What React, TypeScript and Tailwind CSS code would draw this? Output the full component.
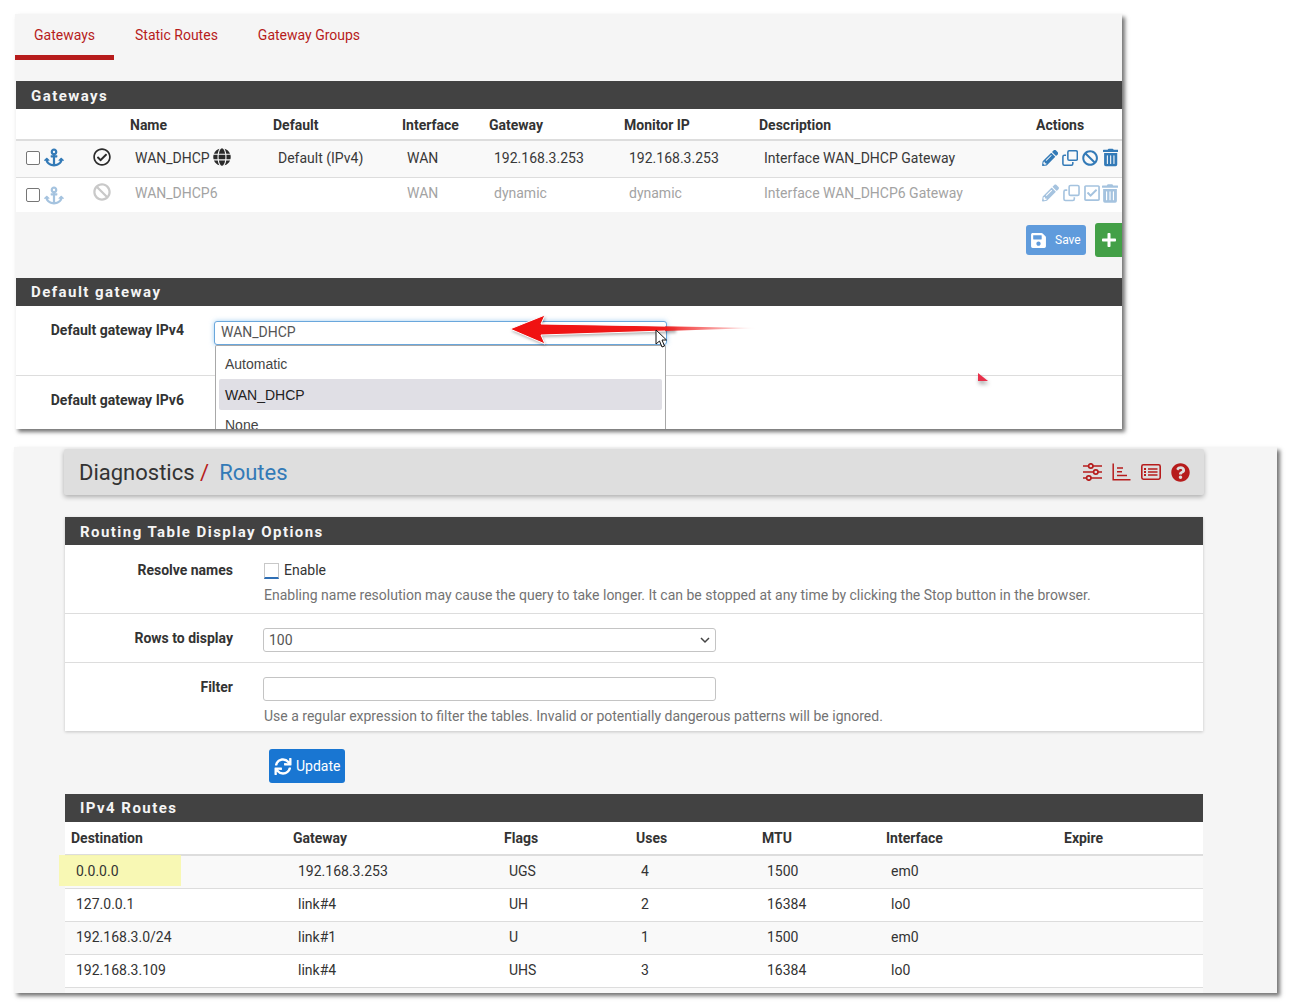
import { FaAnchor, FaBan, FaGlobe, FaPencilAlt, FaPlus, FaQuestionCircle, FaRegCheckCircle, FaRegCheckSquare, FaSave, FaSync, FaTrashAlt } from "react-icons/fa";

const gatewayCols = "grid grid-cols-[114px_143px_129px_87px_135px_135px_277px_82px]";
const routeCols = "grid grid-cols-[222px_211px_132px_126px_124px_178px_145px]";

const routes = [
  ["0.0.0.0", "192.168.3.253", "UGS", "4", "1500", "em0"],
  ["127.0.0.1", "link#4", "UH", "2", "16384", "lo0"],
  ["192.168.3.0/24", "link#1", "U", "1", "1500", "em0"],
  ["192.168.3.109", "link#4", "UHS", "3", "16384", "lo0"],
];

function SectionHead({ title, tight }: { title: string; tight?: boolean }) {
  return (
    <div className={`h-[28px] bg-[#424242] pl-[15px] text-[15px] font-bold tracking-[1.45px] text-[#f5f5f5] ${tight ? "leading-[28px]" : "leading-[30px]"}`}>
      {title}
    </div>
  );
}

function Checkbox() {
  return <span className="block h-[14px] w-[14px] rounded-[2px] border border-[#767676] bg-white" />;
}

function CloneIcon() {
  return (
    <svg className="h-[18px] w-[18px]" viewBox="0 0 18 18" fill="none" stroke="currentColor" strokeWidth="1.7">
      <rect x="6.5" y="1" width="10.5" height="10.5" rx="1.5" />
      <path d="M4.5 6 H2.6 a1.6 1.6 0 0 0 -1.6 1.6 V15.4 a1.6 1.6 0 0 0 1.6 1.6 H10.4 a1.6 1.6 0 0 0 1.6 -1.6 V13.5" />
    </svg>
  );
}

function GatewayRow({ dim, name, icon, def, gw, monitor, desc, actions, status, className }: {
  dim?: boolean; name: string; icon?: boolean; def: string; gw: string; monitor: string; desc: string;
  actions: React.ReactNode; status: React.ReactNode; className: string;
}) {
  return (
    <div className={`${gatewayCols} items-center text-sm ${dim ? "text-[#a3a3a3]" : "text-[#383838]"} ${className}`}>
      <div className={`flex items-center pl-[10px] ${dim ? "mt-[4px]" : ""}`}>
        <Checkbox />
        <FaAnchor className={`ml-[4px] h-[19px] w-[20px] ${dim ? "text-[#a5c3df]" : "text-[#337ab7]"}`} />
        <span className={`ml-[29px] ${dim ? "mb-[6px]" : "mb-[2px]"}`}>{status}</span>
      </div>
      <div className="flex items-center gap-[3px] pl-[5px]">
        {name}
        {icon && <FaGlobe className="mb-[1px] h-[18px] w-[18px] text-[#2b2b2b]" />}
      </div>
      <div className="pl-[5px]">{def}</div>
      <div className="pl-[5px]">WAN</div>
      <div className="pl-[5px]">{gw}</div>
      <div className="pl-[5px]">{monitor}</div>
      <div className="pl-[5px]">{desc}</div>
      <div className={`flex items-center gap-[4px] ${dim ? "text-[#a5c3df]" : "text-[#337ab7]"}`}>{actions}</div>
    </div>
  );
}

function Arrow() {
  return (
    <svg className="absolute left-[495px] top-[300px] h-[60px] w-[270px]" viewBox="0 0 270 60">
      <defs>
        <linearGradient id="tail" x1="0" x2="1" y1="0" y2="0">
          <stop offset="0" stopColor="#f01010" />
          <stop offset="0.62" stopColor="#f01c1c" />
          <stop offset="1" stopColor="#f01c1c" stopOpacity="0" />
        </linearGradient>
        <filter id="soft" x="-10%" y="-50%" width="120%" height="200%">
          <feGaussianBlur stdDeviation="1.5" />
        </filter>
      </defs>
      <path d="M15 29 L50 15 L46 24 L180 26 L180 31 L46 35 L50 44 Z" fill="#000" opacity="0.3" filter="url(#soft)" transform="translate(1 2)" />
      <path d="M15 29 L50 15 L46 24 L262 28 L46 35 L50 44 Z" fill="url(#tail)" />
      <path d="M15 29 L50 15 L46 24 L170 26" fill="none" stroke="#fff" strokeWidth="1" />
      <path d="M15 29 L50 44 L46 35 L170 31" fill="none" stroke="#fff" strokeWidth="1" />
    </svg>
  );
}

function Cursor() {
  return (
    <svg className="absolute left-[655px] top-[329px] h-[20px] w-[13px]" viewBox="0 0 13 20">
      <path d="M1 1 L1 15 L4.5 12 L7 18 L9.5 17 L7 11 L11.5 11 Z" fill="#fff" stroke="#111" strokeWidth="1" />
    </svg>
  );
}

function SlidersIcon() {
  return (
    <svg className="h-[18px] w-[19px]" viewBox="0 0 19 18" fill="none" stroke="#b71c1c" strokeWidth="1.7">
      <path d="M0 3 H5.5 M10 3 H19 M0 9 H10.5 M15 9 H19 M0 15 H3.5 M8 15 H19" />
      <circle cx="7.8" cy="3" r="2.2" />
      <circle cx="12.8" cy="9" r="2.2" />
      <circle cx="5.8" cy="15" r="2.2" />
    </svg>
  );
}

function ChartIcon() {
  return (
    <svg className="h-[18px] w-[19px]" viewBox="0 0 19 18" fill="none" stroke="#b71c1c" strokeWidth="1.5">
      <path d="M1.2 0.5 V16.8 H18.5" />
      <path d="M5 5 H11 M5 8.7 H10 M5 12.4 H15" />
    </svg>
  );
}

function ListIcon() {
  return (
    <svg className="h-[18px] w-[20px]" viewBox="0 0 20 18" fill="none" stroke="#b71c1c" strokeWidth="1.6">
      <rect x="0.8" y="1.8" width="18.4" height="14.4" rx="1.6" />
      <path d="M7 6 H16.5 M7 9 H16.5 M7 12 H16.5" />
      <path d="M3 6 H5 M3 9 H5 M3 12 H5" strokeWidth="1.8" />
    </svg>
  );
}

export default function App() {
  return (
    <div className="relative h-[1008px] w-[1292px] overflow-hidden bg-white pt-[14px] font-['Roboto',sans-serif] text-[#333]">
      {/* gateways capture */}
      <div className="ml-[15px] h-[415px] w-[1107px] overflow-hidden bg-[#f5f5f5] shadow-[3px_3px_4px_rgba(0,0,0,0.55)]">
        <div className="flex h-[46px] items-end text-sm text-[#b71c1c]">
          <div className="flex h-[46px] w-[99px] items-start border-b-[5px] border-[#b71c1c] pl-[19px] pt-[11px]">Gateways</div>
          <div className="h-[46px] pl-[21px] pt-[11px]">Static Routes</div>
          <div className="h-[46px] pl-[40px] pt-[11px]">Gateway Groups</div>
        </div>
        <div className="ml-[1px] mt-[21px]">
          <SectionHead title="Gateways" />
          <div className="bg-white">
            <div className={`${gatewayCols} h-[32px] items-center border-b-2 border-[#ddd] pt-[2px] text-sm font-bold text-[#333]`}>
              <div />
              <div>Name</div>
              <div>Default</div>
              <div>Interface</div>
              <div>Gateway</div>
              <div>Monitor IP</div>
              <div>Description</div>
              <div>Actions</div>
            </div>
            <GatewayRow
              name="WAN_DHCP"
              icon
              def="Default (IPv4)"
              gw="192.168.3.253"
              monitor="192.168.3.253"
              desc="Interface WAN_DHCP Gateway"
              className="h-[37px] border-b border-[#ddd] bg-[#f9f9f9] pb-[3px]"
              status={<FaRegCheckCircle className="h-[18px] w-[18px] text-[#2b2b2b]" />}
              actions={
                <>
                  <FaPencilAlt className="ml-[6px] h-[18px] w-[18px]" />
                  <CloneIcon />
                  <FaBan className="h-[18px] w-[18px]" />
                  <FaTrashAlt className="h-[19px] w-[17px]" />
                </>
              }
            />
            <GatewayRow
              dim
              name="WAN_DHCP6"
              def=""
              gw="dynamic"
              monitor="dynamic"
              desc="Interface WAN_DHCP6 Gateway"
              className="h-[34px] pb-[4px]"
              status={<FaBan className="h-[18px] w-[18px] text-[#c9c9c9]" />}
              actions={
                <>
                  <FaPencilAlt className="ml-[6px] h-[18px] w-[18px]" />
                  <CloneIcon />
                  <FaRegCheckSquare className="h-[18px] w-[17px]" />
                  <FaTrashAlt className="ml-[-2px] h-[19px] w-[17px]" />
                </>
              }
            />
          </div>
        </div>
        <div className="flex h-[66px] items-start justify-end gap-[9px] pt-[11px]">
          <button className="mt-[2px] flex h-[30px] w-[60px] items-center gap-[8px] rounded-[3px] bg-[#5f9bdc] pl-[4px] text-xs text-white">
            <FaSave className="h-[17px] w-[17px]" />
            Save
          </button>
          <button className="flex h-[34px] w-[27px] items-center justify-center rounded-l-[3px] bg-[#43a047] text-white">
            <FaPlus className="h-[16px] w-[16px]" />
          </button>
        </div>
        <div className="ml-[1px]">
          <SectionHead title="Default gateway" tight />
          <div className="h-[123px] bg-white text-sm font-bold text-[#333]">
            <div className="flex h-[70px] border-b border-[#ddd]">
              <div className="w-[168px] pt-[14px] text-right">Default gateway IPv4</div>
              <div className="ml-[30px] mt-[15px] flex h-[24px] w-[453px] items-center rounded-[3px] border border-[#6aa7dc] bg-white pb-[2px] pl-[6px] font-normal text-[#555] shadow-[0_0_5px_rgba(102,175,233,0.6)]">
                WAN_DHCP
              </div>
            </div>
            <div className="flex">
              <div className="w-[168px] pt-[14px] text-right">Default gateway IPv6</div>
            </div>
          </div>
        </div>
      </div>

      {/* select dropdown, cropped at the bottom of the capture */}
      <div className="absolute left-[215px] top-[345px] h-[84px] w-[451px] overflow-hidden rounded-t-[2px] border-x border-t border-[#a8a8a8] bg-white px-[3px] pt-[3px] font-['Liberation_Sans',sans-serif] text-sm text-[#444]">
        <div className="flex h-[30px] items-center pl-[6px]">Automatic</div>
        <div className="flex h-[31px] items-center rounded-[2px] bg-[#e0dfe5] pl-[6px] text-[#222]">WAN_DHCP</div>
        <div className="flex h-[30px] items-center pl-[6px]">None</div>
      </div>
      <Arrow />
      <Cursor />
      <div className="absolute left-[978px] top-[373px] h-0 w-0 border-b-[8px] border-r-[10px] border-b-[#e8304a] border-r-transparent drop-shadow-[1px_3px_2px_rgba(0,0,0,0.35)]" />

      {/* routes capture */}
      <div className="ml-[14px] mt-[18px] h-[546px] w-[1263px] overflow-hidden bg-[#f5f5f5] pl-[51px] pr-[74px] pt-[2px] shadow-[3px_3px_4px_rgba(0,0,0,0.55)]">
        <div className="-mx-[1px] flex h-[46px] items-center justify-between rounded-[2px] bg-[#dedede] pl-[15px] pr-[14px] shadow-[0_2px_5px_rgba(0,0,0,0.3)]">
          <div className="text-[22px] text-[#333]">
            Diagnostics <span className="text-[#b71c1c]">/</span>
            <span className="ml-[10px] text-[#337ab7]">Routes</span>
          </div>
          <div className="flex items-center gap-[10px] text-[#b71c1c]">
            <SlidersIcon />
            <ChartIcon />
            <ListIcon />
            <FaQuestionCircle className="h-[19px] w-[19px]" />
          </div>
        </div>

        <div className="mt-[22px] shadow-[0_1px_3px_rgba(0,0,0,0.2)]">
          <SectionHead title="Routing Table Display Options" />
          <div className="bg-white text-sm">
            <div className="flex h-[69px] border-b border-[#ddd]">
              <div className="w-[168px] pt-[15px] text-right font-bold">Resolve names</div>
              <div className="ml-[30px] pt-[15px]">
                <div className="flex items-center gap-[5px] pl-[1px]">
                  <span className="mt-[2px] block h-[16px] w-[15px] border-x border-t border-b-2 border-[#c8c8c8] border-b-[#2f6fb5] bg-white" />
                  Enable
                </div>
                <div className="mt-[5px] pl-[1px] text-[#737373]">
                  Enabling name resolution may cause the query to take longer. It can be stopped at any time by clicking the Stop button in the browser.
                </div>
              </div>
            </div>
            <div className="flex h-[49px] border-b border-[#ddd]">
              <div className="w-[168px] pt-[14px] text-right font-bold">Rows to display</div>
              <div className="ml-[30px] mt-[14px] flex h-[24px] w-[453px] items-center justify-between rounded-[3px] border border-[#c4c4c4] px-[5px] text-[#555]">
                100
                <svg className="h-[8px] w-[10px]" viewBox="0 0 10 8" fill="none" stroke="#444" strokeWidth="1.5">
                  <path d="M1 2 L5 6 L9 2" />
                </svg>
              </div>
            </div>
            <div className="flex h-[68px]">
              <div className="w-[168px] pt-[14px] text-right font-bold">Filter</div>
              <div className="ml-[30px] pt-[14px]">
                <div className="h-[24px] w-[453px] rounded-[3px] border border-[#c4c4c4]" />
                <div className="mt-[5px] pl-[1px] text-[#737373]">
                  Use a regular expression to filter the tables. Invalid or potentially dangerous patterns will be ignored.
                </div>
              </div>
            </div>
          </div>
        </div>

        <button className="ml-[204px] mt-[18px] flex h-[34px] w-[76px] items-center gap-[4px] rounded-[3px] bg-[#1976d2] pl-[5px] text-sm text-white">
          <FaSync className="h-[17px] w-[18px]" />
          Update
        </button>

        <div className="mt-[11px]">
          <SectionHead title="IPv4 Routes" tight />
          <div className="bg-white text-sm">
            <div className={`${routeCols} h-[34px] items-center border-b-2 border-[#ddd] pl-[6px] font-bold`}>
              <div>Destination</div>
              <div>Gateway</div>
              <div>Flags</div>
              <div>Uses</div>
              <div>MTU</div>
              <div>Interface</div>
              <div>Expire</div>
            </div>
            {routes.map((row, i) => (
              <div key={row[0]} className={`${routeCols} relative h-[33px] items-center border-b border-[#ddd] pb-[2px] pl-[6px] ${i % 2 === 0 ? "bg-[#f9f9f9]" : "bg-white"}`}>
                {i === 0 && <div className="absolute -left-[6px] -top-[1px] h-[31px] w-[122px] bg-[#f8f8a8]/85" />}
                {row.map((cell) => (
                  <div key={cell} className="relative pl-[5px]">{cell}</div>
                ))}
              </div>
            ))}
            <div className="h-[6px] bg-[#f9f9f9]" />
          </div>
        </div>
      </div>
    </div>
  );
}
